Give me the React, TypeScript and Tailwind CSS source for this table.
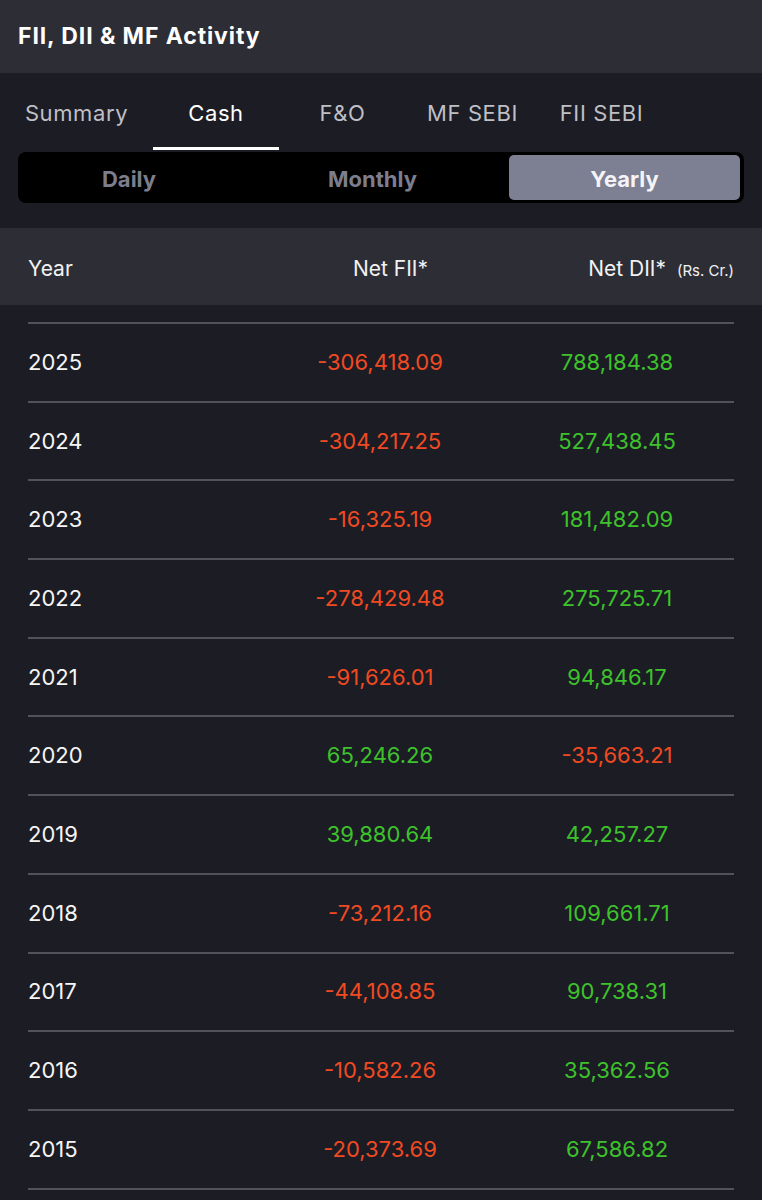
import React from "react";

type Row = { year: string; fii: string; dii: string };

const rows: Row[] = [
  { year: "2025", fii: "-306,418.09", dii: "788,184.38" },
  { year: "2024", fii: "-304,217.25", dii: "527,438.45" },
  { year: "2023", fii: "-16,325.19", dii: "181,482.09" },
  { year: "2022", fii: "-278,429.48", dii: "275,725.71" },
  { year: "2021", fii: "-91,626.01", dii: "94,846.17" },
  { year: "2020", fii: "65,246.26", dii: "-35,663.21" },
  { year: "2019", fii: "39,880.64", dii: "42,257.27" },
  { year: "2018", fii: "-73,212.16", dii: "109,661.71" },
  { year: "2017", fii: "-44,108.85", dii: "90,738.31" },
  { year: "2016", fii: "-10,582.26", dii: "35,362.56" },
  { year: "2015", fii: "-20,373.69", dii: "67,586.82" },
];

const tabs = [
  { label: "Summary", w: "w-[153px]", active: false },
  { label: "Cash", w: "w-[126px]", active: true },
  { label: "F&O", w: "w-[127px]", active: false },
  { label: "MF SEBI", w: "w-[133px]", active: false },
  { label: "FII SEBI", w: "w-[125px]", active: false },
];

function valueColor(v: string) {
  return v.startsWith("-") ? "text-[#f04a22]" : "text-[#3ec22c]";
}

export default function App() {
  return (
    <div className="w-[762px] h-[1200px] overflow-hidden bg-[#1c1c24] font-['Inter','Noto_Sans',sans-serif]">
      {/* Title bar */}
      <div className="h-[73px] bg-[#2d2d36] flex items-center px-[18px]">
        <h1 className="text-[23px] font-bold text-white tracking-[0.9px]">FII, DII &amp; MF Activity</h1>
      </div>

      {/* Tabs */}
      <div className="flex h-[77px]">
        {tabs.map((t) => (
          <div key={t.label} className={`${t.w} flex flex-col items-center`}>
            <div
              className={`h-[74px] pt-[6px] flex items-center text-[22px] tracking-[0.6px] ${
                t.active ? "text-white" : "text-[#bfbfc6]"
              }`}
            >
              {t.label}
            </div>
            {t.active && <div className="h-[3px] w-full bg-white" />}
          </div>
        ))}
      </div>

      {/* Period toggle */}
      <div className="px-[18px] pt-[2px]">
        <div className="h-[51px] bg-black rounded-[8px] p-[3px] pl-[4px] grid grid-cols-[214px_273px_231px]">
          <div className="flex items-center justify-center pt-[4px] text-[22px] font-bold text-[#7c7e8d]">Daily</div>
          <div className="flex items-center justify-center pt-[4px] text-[22px] font-bold text-[#7c7e8d]">Monthly</div>
          <div className="flex items-center justify-center pt-[4px] rounded-[5px] bg-[#7d7f92] text-[22px] font-bold text-[#f4f4f8]">
            Yearly
          </div>
        </div>
      </div>

      {/* Table header */}
      <div className="mt-[25px] h-[77px] pt-[4px] bg-[#2d2d36] px-[28px] grid grid-cols-[232px_168px_306px] items-center text-[21px] text-[#f2f2f2]">
        <div>Year</div>
        <div className="text-right">Net FII*</div>
        <div className="flex items-baseline justify-end gap-[9px]">
          <span className="mr-[2px]">Net DII*</span>
          <span className="text-[15px]">(Rs. Cr.)</span>
        </div>
      </div>

      {/* Rows */}
      <div className="px-[28px] pt-[17px]">
        <div className="h-[2px] bg-[#52525b]" />
        {rows.map((r) => (
          <div key={r.year}>
            <div className="h-[76.7px] grid grid-cols-[232px_240px_234px] items-center text-[22px]">
              <div className="text-[#f5f5f5]">{r.year}</div>
              <div className={`text-center ${valueColor(r.fii)}`}>{r.fii}</div>
              <div className={`text-center ${valueColor(r.dii)}`}>{r.dii}</div>
            </div>
            <div className="h-[2px] bg-[#52525b]" />
          </div>
        ))}
      </div>
    </div>
  );
}
